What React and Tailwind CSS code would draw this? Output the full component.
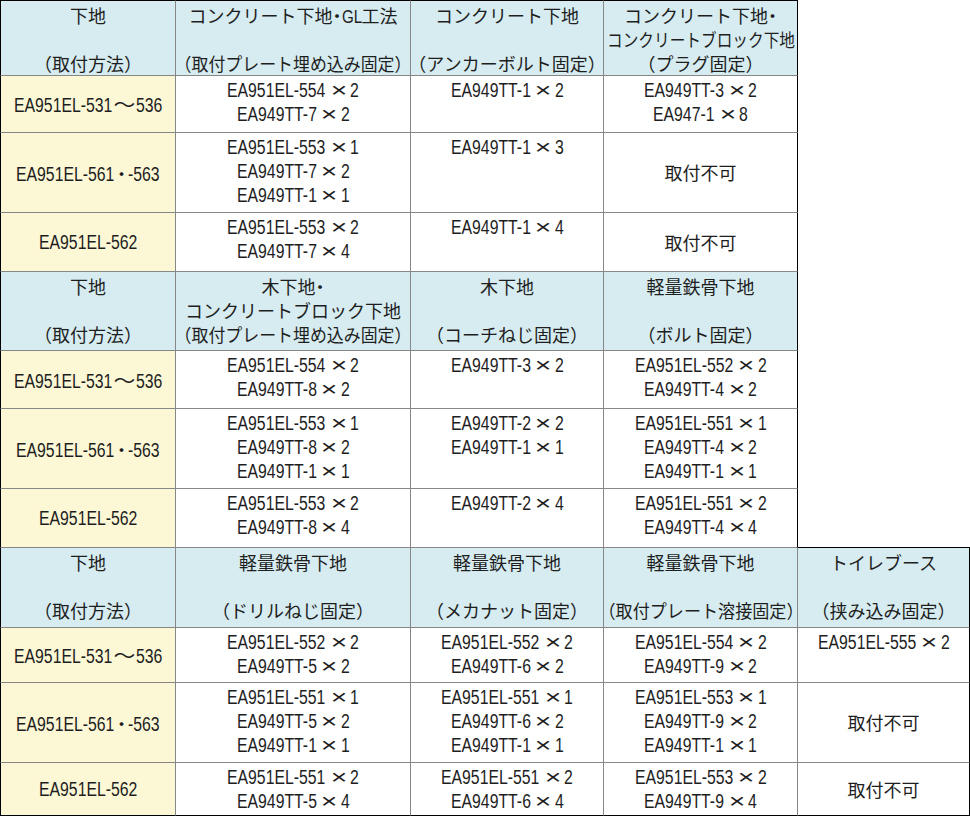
import React, { useLayoutEffect, useRef, useState } from "react";

const NA = "取付不可";

const sections = [
  {
    headers: [
      ["下地", "", "（取付方法）"],
      ["コンクリート下地・GL工法", "", "（取付プレート埋め込み固定）"],
      ["コンクリート下地", "", "（アンカーボルト固定）"],
      ["コンクリート下地・", "コンクリートブロック下地", "（プラグ固定）"],
    ],
    rows: [
      ["EA951EL-531〜536", ["EA951EL-554 ×2", "EA949TT-7 ×2"], ["EA949TT-1 ×2"], ["EA949TT-3 ×2", "EA947-1 ×8"]],
      ["EA951EL-561・-563", ["EA951EL-553 ×1", "EA949TT-7 ×2", "EA949TT-1 ×1"], ["EA949TT-1 ×3"], NA],
      ["EA951EL-562", ["EA951EL-553 ×2", "EA949TT-7 ×4"], ["EA949TT-1 ×4"], NA],
    ],
  },
  {
    headers: [
      ["下地", "", "（取付方法）"],
      ["木下地・", "コンクリートブロック下地", "（取付プレート埋め込み固定）"],
      ["木下地", "", "（コーチねじ固定）"],
      ["軽量鉄骨下地", "", "（ボルト固定）"],
    ],
    rows: [
      ["EA951EL-531〜536", ["EA951EL-554 ×2", "EA949TT-8 ×2"], ["EA949TT-3 ×2"], ["EA951EL-552 ×2", "EA949TT-4 ×2"]],
      ["EA951EL-561・-563", ["EA951EL-553 ×1", "EA949TT-8 ×2", "EA949TT-1 ×1"], ["EA949TT-2 ×2", "EA949TT-1 ×1"], ["EA951EL-551 ×1", "EA949TT-4 ×2", "EA949TT-1 ×1"]],
      ["EA951EL-562", ["EA951EL-553 ×2", "EA949TT-8 ×4"], ["EA949TT-2 ×4"], ["EA951EL-551 ×2", "EA949TT-4 ×4"]],
    ],
  },
  {
    headers: [
      ["下地", "", "（取付方法）"],
      ["軽量鉄骨下地", "", "（ドリルねじ固定）"],
      ["軽量鉄骨下地", "", "（メカナット固定）"],
      ["軽量鉄骨下地", "", "（取付プレート溶接固定）"],
      ["トイレブース", "", "（挟み込み固定）"],
    ],
    rows: [
      ["EA951EL-531〜536", ["EA951EL-552 ×2", "EA949TT-5 ×2"], ["EA951EL-552 ×2", "EA949TT-6 ×2"], ["EA951EL-554 ×2", "EA949TT-9 ×2"], ["EA951EL-555 ×2"]],
      ["EA951EL-561・-563", ["EA951EL-551 ×1", "EA949TT-5 ×2", "EA949TT-1 ×1"], ["EA951EL-551 ×1", "EA949TT-6 ×2", "EA949TT-1 ×1"], ["EA951EL-553 ×1", "EA949TT-9 ×2", "EA949TT-1 ×1"], NA],
      ["EA951EL-562", ["EA951EL-551 ×2", "EA949TT-5 ×4"], ["EA951EL-551 ×2", "EA949TT-6 ×4"], ["EA951EL-553 ×2", "EA949TT-9 ×4"], NA],
    ],
  },
];

const colMax = [168, 220, 186, 188, 166];

function Narrow({ children, k = 0.79 }) {
  const ref = useRef(null);
  const [w, setW] = useState(null);
  useLayoutEffect(() => {
    if (ref.current) setW(ref.current.offsetWidth);
  }, []);
  return (
    <span className="inline-block whitespace-nowrap" style={w ? { width: w * k } : undefined}>
      <span
        ref={ref}
        className="inline-block origin-left whitespace-nowrap"
        style={{ transform: `scaleX(${k})` }}
      >
        {children}
      </span>
    </span>
  );
}

function Rich({ text }) {
  const out = [];
  let buf = "";
  const flush = () => {
    if (buf) {
      out.push(<Narrow key={out.length}>{buf}</Narrow>);
      buf = "";
    }
  };
  for (const ch of text) {
    if (ch === "×") {
      buf = buf.replace(/ $/, "");
      flush();
      out.push(
        <span
          key={out.length}
          className="ml-[3px] mr-[1px] inline-flex w-[20px] justify-center font-['Liberation_Sans',sans-serif] text-[21px] leading-[24px]"
        >
          <span className="inline-block scale-x-[1.35]">×</span>
        </span>
      );
    } else if (ch === "〜") {
      flush();
      out.push(
        <span
          key={out.length}
          className="inline-flex w-[23px] justify-center font-['Noto_Sans_CJK_JP',sans-serif] text-[19px] leading-[24px]"
        >
          <span className="inline-block scale-x-[1.15]">〜</span>
        </span>
      );
    } else if (ch === "・") {
      flush();
      out.push(
        <span
          key={out.length}
          className="inline-flex w-[13px] justify-center font-['Noto_Sans_CJK_JP',sans-serif] text-[18px] leading-[24px] [font-feature-settings:'halt']"
        >
          ・
        </span>
      );
    } else {
      buf += ch;
    }
  }
  flush();
  return <>{out}</>;
}

function Fit({ children, max }) {
  const ref = useRef(null);
  const [s, setS] = useState(1);
  useLayoutEffect(() => {
    const w = ref.current ? ref.current.offsetWidth : 0;
    if (w > max) setS(max / w);
  }, [max]);
  return (
    <div className="flex h-[24px] justify-center whitespace-nowrap leading-[24px]">
      <span
        ref={ref}
        className="inline-block"
        style={s < 1 ? { transform: `scaleX(${s})` } : undefined}
      >
        {children}
      </span>
    </div>
  );
}

function HeaderText({ text }) {
  const i = text.indexOf("GL");
  if (i < 0) return <>{text || "\u00a0"}</>;
  return (
    <>
      {text.slice(0, i)}
      <span className="font-['Liberation_Sans',sans-serif] text-[19px]">
        <Narrow k={0.8}>GL</Narrow>
      </span>
      {text.slice(i + 2)}
    </>
  );
}

function DataLine({ text }) {
  return (
    <div className="flex h-[24px] items-baseline justify-center whitespace-nowrap leading-[24px]">
      <Rich text={text} />
    </div>
  );
}

function borderClasses({ top, left, rightBlack, bottomBlack }) {
  return [
    top ? "border-t border-t-black" : "",
    left ? "border-l border-l-black" : "",
    rightBlack ? "border-r border-r-black" : "border-r border-r-[#878787]",
    bottomBlack ? "border-b border-b-black" : "border-b border-b-[#878787]",
  ].join(" ");
}

export default function App() {
  const cells = [];
  sections.forEach((sec, s) => {
    for (let r = 0; r < 4; r++) {
      for (let c = 0; c < 5; c++) {
        const key = `${s}-${r}-${c}`;
        if (c === 4 && s < 2) {
          cells.push(
            <div
              key={key}
              className={s === 1 && r === 3 ? "border-b border-b-black bg-white" : "bg-white"}
            />
          );
          continue;
        }
        const b = borderClasses({
          top: s === 0 && r === 0,
          left: c === 0,
          rightBlack: (c === 3 && s < 2) || c === 4,
          bottomBlack: s === 2 && r === 3,
        });
        if (r === 0) {
          const lines = sec.headers[c];
          cells.push(
            <div
              key={key}
              className={`${b} flex flex-col bg-[#d6ecf0] pt-[2px] font-['Noto_Sans_CJK_JP',sans-serif] text-[18px] [font-feature-settings:'halt']`}
            >
              {lines.map((ln, i) => (
                <Fit key={i} max={colMax[c]}>
                  <HeaderText text={ln} />
                </Fit>
              ))}
            </div>
          );
          continue;
        }
        const row = sec.rows[r - 1];
        if (c === 0) {
          cells.push(
            <div
              key={key}
              className={`${b} flex items-center justify-center bg-[#fcf8d6] text-[20px]`}
            >
              <DataLine text={row[0]} />
            </div>
          );
          continue;
        }
        const v = row[c];
        if (v === NA) {
          cells.push(
            <div
              key={key}
              className={`${b} flex items-center justify-center bg-white font-['Noto_Sans_CJK_JP',sans-serif] text-[18px]`}
            >
              <span className="whitespace-nowrap">{NA}</span>
            </div>
          );
          continue;
        }
        cells.push(
          <div key={key} className={`${b} flex flex-col bg-white pt-[2px] text-[20px]`}>
            {v.map((ln, i) => (
              <DataLine key={i} text={ln} />
            ))}
          </div>
        );
      }
    }
  });

  return (
    <div className="h-[816px] w-[970px] overflow-hidden bg-white font-['Liberation_Sans','Noto_Sans_CJK_JP',sans-serif] text-[#1e1e1e]">
      <div className="grid grid-cols-[176px_235px_193px_194px_172px] grid-rows-[76px_57px_80px_59px_79px_58px_80px_59px_80px_55px_80px_53px]">
        {cells}
      </div>
    </div>
  );
}
